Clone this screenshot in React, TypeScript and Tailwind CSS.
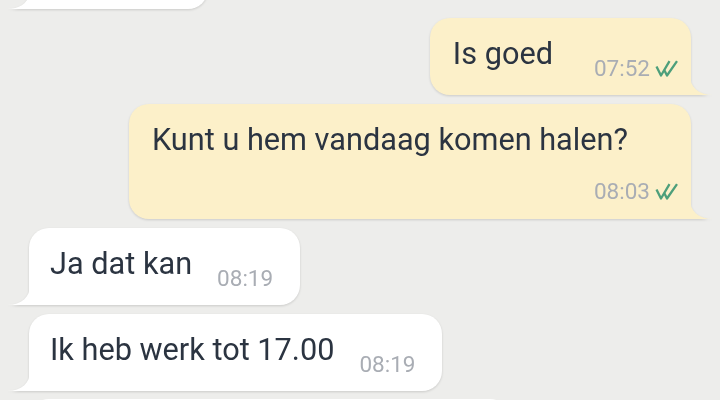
import React from 'react';

type Msg = {
  id: number;
  text: string;
  time: string;
  out: boolean;
  stacked?: boolean;
};

const messages: Msg[] = [
  { id: 1, text: 'Is goed', time: '07:52', out: true },
  { id: 2, text: 'Kunt u hem vandaag komen halen?', time: '08:03', out: true, stacked: true },
  { id: 3, text: 'Ja dat kan', time: '08:19', out: false },
  { id: 4, text: 'Ik heb werk tot 17.00', time: '08:19', out: false },
];

const DoubleTick = () => (
  <svg width="24" height="17" viewBox="0 0 24 17" fill="none" className="mb-[2px] ml-[5px] shrink-0">
    <path d="M1.5 6.5 L6 15.5 L14.5 1.2" stroke="#4d9f7b" strokeWidth="2.3" strokeLinejoin="round" />
    <path d="M9.5 10.5 L12 15.5 L22 1.2" stroke="#4d9f7b" strokeWidth="2.3" strokeLinejoin="round" />
  </svg>
);

// the little fillet that joins the bubble to its corner
const Tail = ({ out }: { out: boolean }) =>
  out ? (
    <svg width="23" height="20" viewBox="0 0 23 20" className="absolute bottom-0 -right-[22px]">
      <path d="M0 0 C0 12 8 20 23 20 L0 20 Z" fill="#fcf0c9" />
    </svg>
  ) : (
    <svg width="23" height="20" viewBox="0 0 23 20" className="absolute bottom-0 -left-[22px]">
      <path d="M23 0 C23 12 15 20 0 20 L23 20 Z" fill="#ffffff" />
    </svg>
  );

const Time = ({ value }: { value: string }) => (
  <span className="text-[22.5px] leading-[22px] text-[#a9adb4]">{value}</span>
);

const Bubble = ({ msg }: { msg: Msg }) => {
  if (msg.stacked) {
    return (
      <div className="relative self-end drop-shadow-[0_1px_1px_rgba(0,0,0,0.14)]">
        <div className="rounded-[20px] rounded-br-none bg-[#fcf0c9] pl-[23px] pr-[12px] pt-[18px] pb-[17px]">
          <div className="text-[30.7px] leading-[36px] text-[#2b3441] pr-[51px]">{msg.text}</div>
          <div className="mt-[22px] flex h-[22px] items-end justify-end">
            <Time value={msg.time} />
            <DoubleTick />
          </div>
        </div>
        <Tail out />
      </div>
    );
  }

  return (
    <div
      className={`relative drop-shadow-[0_1px_1px_rgba(0,0,0,0.14)] ${msg.out ? 'self-end' : 'self-start'}`}
    >
      <div
        className={
          msg.out
            ? 'flex items-end rounded-[20px] rounded-br-none bg-[#fcf0c9] pl-[23px] pr-[12px] pt-[18px] pb-[16px]'
            : 'flex items-end rounded-[20px] rounded-bl-none bg-white pl-[21px] pr-[27px] pt-[18px] pb-[16px]'
        }
      >
        <span className="mb-[7px] text-[30.7px] leading-[36px] text-[#2b3441]">{msg.text}</span>
        <span className={msg.out ? 'ml-[41px] flex items-end' : 'ml-[25px] flex items-end'}>
          <Time value={msg.time} />
          {msg.out && <DoubleTick />}
        </span>
      </div>
      <Tail out={msg.out} />
    </div>
  );
};

export default function App() {
  return (
    <div
      className="h-[400px] w-[720px] overflow-hidden bg-[#ededeb]"
      style={{ fontFamily: 'Roboto, "Noto Sans", sans-serif' }}
    >
      <div className="flex flex-col gap-[9px] pl-[29px] pr-[29px]">
        {/* previous message, scrolled mostly out of view */}
        <div className="relative -mt-[61px] self-start drop-shadow-[0_1px_1px_rgba(0,0,0,0.14)]">
          <div className="h-[70px] w-[179px] rounded-[20px] rounded-bl-none bg-white" />
          <Tail out={false} />
        </div>

        {messages.map((m) => (
          <Bubble key={m.id} msg={m} />
        ))}

        {/* next message, just peeking in */}
        <div className="relative -mt-[1px] self-start">
          <div className="h-[70px] w-[481px] rounded-[20px] bg-white" />
        </div>
      </div>
    </div>
  );
}
